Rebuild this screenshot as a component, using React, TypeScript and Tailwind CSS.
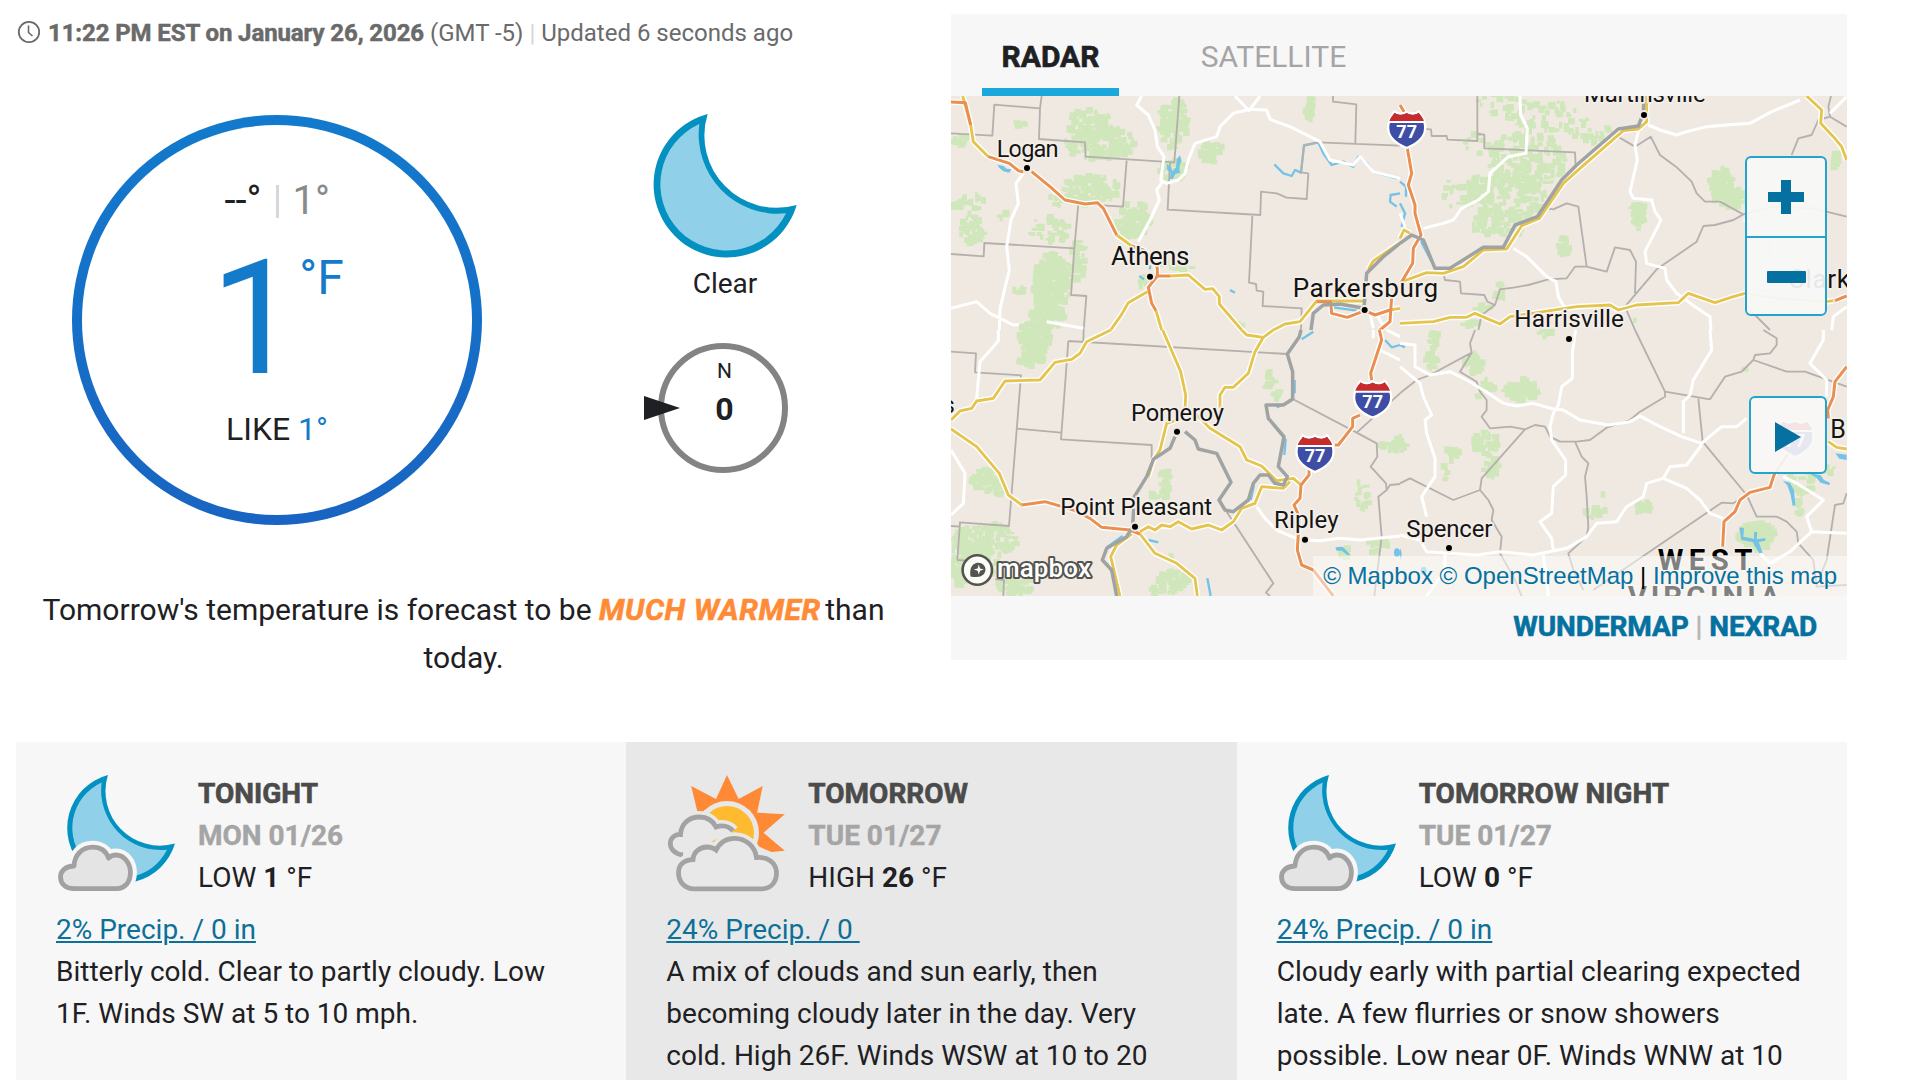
import clsx from "clsx";

type Blob = [cx: number, cy: number, rx: number, ry: number, density?: number];

type Label = {
  text: string;
  x: number;
  y: number;
  width: number;
  size?: number;
  dot?: [number, number];
};

type Tile = {
  x: number;
  y: number;
  woods: Blob[];
  county: string;
  river: string;
  water: string;
  lakes?: string;
  minor: string;
  yellow: string;
  orange: string;
  shields: [number, number][];
  labels: Label[];
};

const tiles: Tile[] = [
  {
    x: -33,
    y: -288,
    woods: [
      [450, 370, 65, 40, 1.8], [480, 430, 105, 50, 1.8], [450, 570, 90, 45, 1.8], [580, 660, 50, 55, 2.4],
      [700, 370, 45, 75, 1.6], [815, 455, 36, 33, 2], [1108, 325, 14, 34, 2.4], [85, 610, 50, 35, 0.8],
      [95, 690, 38, 45, 1.5], [330, 690, 60, 45, 0.9], [335, 850, 56, 90, 3], [415, 780, 24, 60, 1.8], [60, 420, 25, 16, 2],
      [250, 370, 22, 10], [715, 798, 50, 20], [350, 600, 22, 18], [186, 642, 12, 16], [250, 870, 28, 8, 2],
      [320, 950, 55, 40, 2.6], [700, 510, 44, 34, 1.8], [610, 845, 18, 15], [907, 972, 12, 12],
    ],
    county:
      "M33 400L157 407 163 314 300 325 305 288M300 325L297 417 435 427 437 470 703 487 718 288M560 482L549 620 415 612 403 745 133 729 131 769 33 762M403 745L393 885 439 888 431 990M690 487L683 629 961 645 963 575 1010 580 1040 593 1100 597 1105 520 1083 517 1092 435 1135 427 1380 437M1179 288V305L1249 313 1246 430M937 648L927 848 948 852 950 872 970 875 968 918 1085 925 1083 990",
    river: "M1113 990L1120 940 1150 915 1200 912 1272 925 1280 820 1330 770 1380 730",
    water:
      "M1003 493L1030 520 1055 528 1065 510 1083 518 1092 437 1135 427 1150 460 1175 495 1210 485 1240 500 1255 470 1280 490 1300 515 1370 535M1380 580L1352 585 1350 605 1370 620M1180 922L1250 932M870 870L885 878M598 828L612 838M630 795V808",
    lakes:
      "M680 492L692 500 698 514 708 502 710 478 720 466 724 482 718 502 720 518 706 522 698 538 690 536 692 518 682 510ZM172 494L190 498 200 506 214 508 208 518 190 514 178 504Z",
    minor:
      "M605 288L590 315 625 345 645 390 652 440 672 470 668 500 662 540 680 550 715 540 735 520 745 480 765 430 830 410 840 380 880 340 930 328 980 330 990 358 1050 380 1140 425 1170 480 1240 495 1260 470 1300 515 1380 535M668 545L650 570 658 600 630 660 595 725M250 520L228 550 235 610 213 660 200 740 208 810 180 925 178 990M33 925L110 905 150 940 220 975 320 965 430 985M930 328L960 288M885 288L930 335M1290 940L1300 985M1310 945L1335 985",
    yellow:
      "M68 288L92 375 100 425 145 470M530 705L575 738M648 932L665 990M690 828L745 825 795 868 818 866 838 890 838 912 905 990M622 875L565 908 545 943 512 990M1000 990L1035 972 1080 965 1130 903 1270 903M1380 728L1300 783 1285 808M1350 930L1380 925",
    orange:
      "M33 306L76 308 92 375M145 470L208 490 235 512 250 515M275 515L330 560 375 600 435 612 472 608 490 625 530 705M575 738L610 750 640 775 652 805 652 828 625 862 635 910 648 932M652 828H690M1130 905L1172 905 1175 940 1222 952 1275 932 1305 945 1350 930M1355 890L1350 965 1320 990",
    shields: [],
    labels: [
      { text: "Logan", x: 170, y: 470, width: 186, size: 71, dot: [261, 504] },
      { text: "Athens", x: 513, y: 795, width: 235, size: 78, dot: [630, 830] },
      { text: "Parkersburg", x: 1058, y: 890, width: 436, size: 78, dot: [1274, 930] },
    ],
  },
  {
    x: 1347,
    y: -288,
    woods: [
      [300, 310, 80, 30, 0.5], [430, 350, 110, 50, 0.6], [560, 390, 70, 40, 0.6], [380, 480, 120, 85, 1.1],
      [310, 590, 130, 75, 1.1], [300, 670, 85, 40, 1.1], [160, 580, 28, 45, 0.6], [230, 440, 40, 40, 0.4],
      [965, 550, 34, 46, 3], [995, 595, 55, 28, 3], [715, 650, 26, 44, 1.8], [492, 740, 18, 30, 1.8], [300, 880, 20, 28, 1.8],
      [210, 970, 26, 14, 2], [1308, 480, 12, 30, 2], [250, 925, 28, 16], [700, 955, 8, 8],
    ],
    county:
      "M232 288V423L142 419 140 408 95 408 93 388 40 385M232 402L253 404V445L525 457 527 498M650 408L705 440 752 410 780 465 828 500 875 545 890 580 915 605 960 605 1030 643 1000 660 945 675 910 678 890 725 770 808 675 920 705 990M440 625L460 628 500 610 535 620 560 800M130 820L135 840 180 845 183 880 253 885 262 905 285 915 300 868 345 862 385 855 445 838 500 835 525 800 560 800 620 815 645 742 690 750 708 785 705 880M285 915L245 945 235 990M1030 643L1120 620 1240 625 1340 650M1175 465L1195 415 1235 405 1255 360 1290 350 1340 380M1290 350L1285 320 1293 288M1050 930L1110 990",
    river:
      "M732 288L730 340 715 378 655 387 530 495 485 540 412 650 345 675 310 742 250 742 150 805 105 805 70 720 35 705 0 730",
    water: "M0 545L18 560 18 590M0 610L15 640 5 680M62 722L95 785",
    minor:
      "M360 288L362 345 382 385 378 460 325 470 270 520 265 575 235 600 185 625 160 660 130 670 70 685M745 375L780 390 830 405 860 395 920 380 980 375 1050 370 1115 335 1200 300M715 395L705 435 712 480 690 575 700 595 755 600 765 635 783 660 735 755 740 790 795 805 800 840 830 880 885 920 930 950 933 990M340 745L380 770 440 830 468 845 475 890 495 925M1340 290L1290 340M1030 660L1120 690 1125 780M1340 920L1300 950 1295 990M0 640L15 680",
    yellow:
      "M740 288L740 365 715 387 670 392 540 505 490 550 418 655 365 677 320 747 250 750 190 800 130 820 80 818 0 847M0 970L100 965 150 952 200 952 225 940 260 955 300 972 330 950 430 935 530 920 630 915 655 930 710 915 835 908 865 880 945 908 1000 890 1035 880 1130 895 1280 905 1300 902M0 715L12 690 30 700M1220 288L1265 330 1262 370 1300 410 1325 440 1340 480",
    orange: "M0 315L15 340M22 445L35 520 25 555 45 615 45 640 63 705 40 745 38 790 5 845M1305 902L1340 888",
    shields: [[20, 388]],
    labels: [
      { text: "Martinsville", x: 552, y: 305, width: 365, size: 72, dot: [732, 345] },
      { text: "Harrisville", x: 343, y: 980, width: 329, size: 73, dot: [507, 1017] },
      { text: "Clarksburg", x: 1164, y: 865, width: 392, size: 78 },
    ],
  },
  {
    x: -33,
    y: 702,
    woods: [
      [285, 20, 50, 50, 3], [275, 85, 40, 26, 3], [140, 450, 46, 34, 2], [175, 480, 16, 18, 2], [675, 455, 18, 42, 2],
      [660, 490, 30, 20, 2], [985, 150, 24, 28, 1.4], [1012, 190, 10, 20, 2.4], [140, 630, 95, 50, 1.4], [60, 680, 26, 90, 1.6],
      [120, 690, 60, 70, 1], [230, 765, 55, 30, 1.4], [700, 755, 46, 32, 2.6], [650, 785, 25, 15, 2], [1365, 345, 42, 20, 1.8],
      [1265, 495, 28, 45, 0.8], [1310, 640, 38, 16, 1.6], [1305, 665, 13, 18], [1215, 670, 30, 16], [700, 678, 8, 12],
    ],
    county:
      "M33 65L108 70 105 127 243 136 207 588 60 577 52 690 95 693M33 588L60 590M165 748L192 750 190 798M385 33L363 328 635 345 635 390M385 33L1042 72M232 296L363 308M431 0L430 33M1058 207L1250 308 1310 340 1312 380 1292 410 1338 460 1340 480 1315 500 1325 620 1303 798M1250 308L1380 190M850 530L1000 760 978 788 990 798M1340 480L1350 465 1380 462",
    river:
      "M1083 0L1078 20 1042 72 1058 125 1058 207 1030 225 978 225 985 265 1032 320 1015 410 1042 440 1030 465 1005 460 985 435 960 435 940 460 925 510 880 545 855 540 837 510 873 457 830 370 775 357 765 330 735 305M705 320L690 355 640 388 620 440 583 500 578 590 560 620 500 655 487 690 515 720 530 798",
    water:
      "M1120 5L1085 28M1064 150V190M1050 215L1010 232M1000 285L1037 330 1033 375M942 465L932 510M625 630L655 637M802 745L812 798M1335 30L1355 52 1380 45M548 618L500 652M500 700L525 740",
    lakes: "M1186 652L1208 650 1220 662 1232 676 1220 674 1206 662 1190 662ZM1362 668a9 13 0 1 0 18 0a9 13 0 1 0 -18 0Z",
    minor:
      "M175 0V33L120 95 110 205M33 360L75 430 70 520 33 555M950 530L975 565 1010 600 1075 628M1100 630L1140 632 1200 625 1260 630 1380 618M1300 0L1300 25M1380 90L1320 60M1340 0L1380 20",
    yellow:
      "M512 0L440 35 420 70 395 88 345 97 300 150 195 153 160 205 110 213 95 235 60 243 33 270M33 297L110 350 178 430 205 495 245 525M668 0L722 125 737 195 735 245M765 250L810 295 900 350 920 390 965 408 1010 452 1060 445 1083 465M905 0L920 15 970 22 1000 0M970 22L945 65 925 130 880 172 855 172 840 195 840 235M735 262L680 280 660 360 640 390 625 440M600 605L625 590 645 600 665 585 690 590 715 575 755 597 805 585 845 600 880 575 905 535 945 520 965 470 1030 475 1050 455M600 612L645 670 710 700 765 745 772 798M575 612L530 645 512 680 540 798",
    orange:
      "M1318 0L1325 30 1292 130 1295 150M1260 255L1238 265 1238 290 1195 345 1185 345M1107 420L1107 435 1083 465 1080 505 1062 525 1078 560 1072 660 1085 705 1120 720 1180 798M245 525L315 515 400 540 450 565 485 592 570 600 600 612",
    shields: [[1298, 207], [1125, 370]],
    labels: [
      { text: "s", x: 8, y: 250, width: 34, size: 70 },
      { text: "Pomeroy", x: 573, y: 273, width: 279, size: 71, dot: [711, 305] },
      { text: "Point Pleasant", x: 361, y: 555, width: 455, size: 72, dot: [585, 590] },
      { text: "Ripley", x: 1002, y: 595, width: 194, size: 72, dot: [1095, 629] },
    ],
  },
  {
    x: 1347,
    y: 702,
    woods: [
      [103, 30, 18, 32, 1.8], [98, 90, 20, 26, 1.8], [220, 100, 26, 34, 2], [240, 195, 12, 14], [365, 180, 52, 32, 2.4],
      [265, 165, 22, 22, 1.6], [255, 340, 40, 38, 1.8], [275, 410, 22, 38, 1.8], [155, 375, 24, 22], [138, 430, 8, 30],
      [435, 10, 25, 12], [730, 530, 27, 22, 2.6], [580, 545, 40, 16, 1.4], [605, 497, 8, 6], [1070, 620, 56, 42, 3.2],
      [1200, 455, 45, 40, 1.2], [1198, 530, 16, 26, 1.6], [1290, 415, 16, 20], [2, 340, 10, 20], [1040, 118, 8, 6],
    ],
    county:
      "M225 0L210 40 215 68 90 135 50 150 0 190M215 68L180 125 230 155 240 185 260 210 260 240 245 260 270 295 330 290 375 298 245 445 240 480 160 510 30 445 0 460M240 480L265 510 280 540 275 570 305 620 300 670 340 740 365 798M375 298L405 285 435 290 450 320 480 335 530 335 570 330 620 293 690 270 720 245 795 200 795 185 705 0M795 185L930 208 975 140 1025 125 1060 90 1065 75 1110 70 1130 45 1130 25 1090 0M1060 90L1160 125 1215 125 1340 170M895 205L908 335 1040 495 1070 560 1130 560 1160 575 1190 605 1195 640 1240 690 1250 770 1340 765M1040 495L1000 520 965 518 580 780M525 335L545 380 565 400 555 440 560 500 565 590 560 620 505 670 520 720 550 780M1340 490L1330 520 1305 525 1280 690 1260 740",
    river: "",
    water: "M0 45L15 52",
    lakes:
      "M1018 592L1032 594 1030 620 1062 626 1062 606 1072 606 1070 628 1096 624 1096 632 1076 636 1088 668 1078 670 1066 650 1058 636 1024 630ZM1148 452L1170 458 1182 480 1186 526 1178 528 1172 494 1162 466ZM1225 428L1262 436 1272 450 1290 458 1288 466 1262 458 1250 444ZM1306 370L1340 374V390L1318 386ZM62 722a9 12 0 1 0 18 0a9 12 0 1 0 -18 0ZM0 655Q10 672 0 690Z",
    minor:
      "M0 40L45 45 45 110 90 135 150 125 200 150 250 180 310 220 350 228 400 220 460 237 490 240 540 270 625 285 690 275 720 258 780 290 845 320 905 340 940 310 965 290 1010 290 1040 265M527 0L517 70 517 145 485 170 475 225 460 250 450 290 455 330 497 390 497 435 460 470 455 550 420 575 455 625 460 660M0 110L60 160 70 200 95 255 75 270 80 310 105 385 105 440 65 500 80 560M0 615L60 630 80 665 150 670 230 675 300 665 400 675 500 655 560 620 590 580 650 575 680 530 730 500 740 460 790 445 810 410 860 405 905 345M930 0L935 60 880 150 870 195 850 215 850 310M1270 0L1270 30 1230 100 1280 150 1280 200M790 445L860 475 900 510 930 550 970 565M1150 440L1190 460 1270 510 1220 560 1235 605 1340 610M1235 605L1170 665 1110 700 1080 670M135 670L135 720 80 798M430 675L445 798",
    yellow: "M1285 335L1310 352 1340 357",
    orange: "M1340 110L1305 155 1300 200 1283 240 1285 265M1165 370L1122 435 1110 472 1050 487 1020 510 1005 545 972 575 968 650",
    shields: [[1185, 325]],
    labels: [
      { text: "Spencer", x: 19, y: 620, width: 258, size: 72, dot: [147, 654] },
      { text: "Bu", x: 1291, y: 325, width: 88, size: 75 },
    ],
  },
];

// Scatter small axis-aligned cells inside an ellipse, seeded so every render is the same
function woodland([cx, cy, rx, ry, density = 1.2]: Blob) {
  let seed = Math.round(cx * 31 + cy * 17 + rx) + 7;
  const rand = () => {
    seed = (seed * 1103515245 + 12345) % 2147483648;
    return seed / 2147483648;
  };
  const count = Math.round(((3.14 * rx * ry) / 200) * density);
  let d = "";
  for (let i = 0; i < count; i++) {
    const angle = rand() * 6.283;
    const r = Math.sqrt(rand());
    const w = 8 + rand() * 16;
    const h = 8 + rand() * 14;
    const x = cx + Math.cos(angle) * r * rx - w / 2;
    const y = cy + Math.sin(angle) * r * ry - h / 2;
    d += `M${x.toFixed(0)} ${y.toFixed(0)}h${w.toFixed(0)}v${h.toFixed(0)}h-${w.toFixed(0)}z`;
  }
  return d;
}

function Shield({ x, y }: { x: number; y: number }) {
  return (
    <g transform={`translate(${x} ${y})`}>
      <path
        d="M-37 -54C-26 -45 -12 -45 0 -53C12 -45 26 -45 37 -54C42 -45 52 -34 55 -14C60 18 36 42 0 56C-36 42 -60 18 -55 -14C-52 -34 -42 -45 -37 -54Z"
        fill="#3f4ea5"
        stroke="#fff"
        strokeWidth="7"
      />
      <path
        d="M-36 -50C-26 -42 -12 -42 0 -49C12 -42 26 -42 36 -50C42 -42 50 -34 52 -24H-52C-50 -34 -42 -42 -36 -50Z"
        fill="#c72b2b"
      />
      <path d="M-54 -22H54" stroke="#fff" strokeWidth="6" />
      <text y="26" textAnchor="middle" fill="#fff" className="text-[54px] font-bold">
        77
      </text>
    </g>
  );
}

function RadarMap() {
  return (
    <svg viewBox="0 0 2688 1500" className="block h-full w-full bg-[#efe9e1]" fill="none" strokeLinejoin="round">
      {tiles.map((tile, i) => (
        <g key={i} transform={`translate(${tile.x} ${tile.y})`}>
          <path d={tile.woods.map(woodland).join("")} fill="#d0e7bb" />
          <path d={tile.water} stroke="#74c3e6" strokeWidth="7" />
          <path d={tile.county} stroke="#b5b0ae" strokeWidth="5.5" />
          <path d={tile.minor} stroke="#fff" strokeWidth="9" />
          {tile.lakes && <path d={tile.lakes} fill="#74c3e6" />}
          <path d={tile.yellow} stroke="#fff" strokeWidth="17" />
          <path d={tile.orange} stroke="#fff" strokeWidth="17" />
          <path d={tile.yellow} stroke="#e5c44e" strokeWidth="8.5" />
          <path d={tile.orange} stroke="#e98f52" strokeWidth="9" />
          <path d={tile.river} stroke="#a0a3a4" strokeWidth="10.5" />
        </g>
      ))}
      {tiles.map((tile, i) => (
        <g key={i} transform={`translate(${tile.x} ${tile.y})`}>
          {tile.shields.map(([x, y]) => (
            <Shield key={x} x={x} y={y} />
          ))}
          {tile.labels.map((label) => (
            <g key={label.text}>
              {label.dot && (
                <circle cx={label.dot[0]} cy={label.dot[1]} r="12" fill="#000" stroke="#efe9e1" strokeWidth="6" />
              )}
              <text
                x={label.x}
                y={label.y}
                fontSize={label.size}
                textLength={label.width}
                fill="#141414"
                stroke="#f3eee8"
                strokeWidth="11"
                paintOrder="stroke"
              >
                {label.text}
              </text>
            </g>
          ))}
        </g>
      ))}
      <g fill="#000" stroke="#f3eee8" strokeWidth="9" paintOrder="stroke" className="text-[88px] font-bold">
        <text x="2120" y="1422" textLength="284">
          WEST
        </text>
        <text x="2030" y="1532" textLength="456">
          VIRGINIA
        </text>
      </g>
    </svg>
  );
}

function MapboxLogo() {
  return (
    <svg viewBox="0 0 134 34" className="absolute bottom-[9px] left-[9px] h-[34px] w-[134px]" fill="none">
      <circle cx="17.3" cy="17" r="14.7" fill="#fff" fillOpacity="0.85" stroke="#54534f" strokeWidth="2.6" />
      <path
        d="M10.5 23.5C9.6 17.6 10.7 14 13.4 11.6C16.6 8.9 21 9.3 23.6 11.9C26.2 14.6 26 18.8 23.4 21.5C20.8 24 17 24.6 10.5 23.5Z"
        fill="#54534f"
      />
      <path d="M18.8 11.6L20 15.4L23.8 16.6L20 17.8L18.8 21.6L17.6 17.8L13.8 16.6L17.6 15.4Z" fill="#fff" />
      <text
        x="37"
        y="24"
        textLength="94"
        fill="#fff"
        stroke="#54534f"
        strokeWidth="4"
        strokeLinejoin="round"
        paintOrder="stroke"
        className="text-[26px] font-medium"
      >
        mapbox
      </text>
    </svg>
  );
}

function MoonShape() {
  return (
    <>
      <path d="M263 42A219 219 0 1 0 530 315A217 217 0 0 1 263 42Z" fill="#0391c1" />
      <path d="M238 72A198.5 198.5 0 1 0 498 340A238 238 0 0 1 238 72Z" fill="#90d1e9" />
    </>
  );
}

function NightCloudIcon() {
  const cloud =
    "M18 115.7H60.5C69 115.7 74.4 109 74.4 99.5C74.4 90 68 82 60 82C57 82 54.5 83 52.5 85C50 78 44 74.2 36.5 74.2C26 74.2 18.5 82 18 93C10 93 4.5 97.5 4.5 104C4.5 111 10 115.7 18 115.7Z";
  return (
    <svg viewBox="0 0 120 120" className="h-[120px] w-[120px] shrink-0" strokeLinejoin="round">
      <g transform="translate(-14.1 -8.6) scale(0.2511)">
        <MoonShape />
      </g>
      <path d={cloud} fill="#f7f7f7" stroke="#f7f7f7" strokeWidth="13" />
      <path d={cloud} fill="#e4e4e4" stroke="#a1a1a1" strokeWidth="4.8" />
    </svg>
  );
}

function SunCloudIcon() {
  const back = "M17 82C9 81 4.3 76 4.3 70.5C4.3 65 9 61 14.5 61.5C15 51 23 44 33.5 44C41 44 47 48 50 54C56 52 63 53 67 58";
  const front =
    "M28 115.8C18 115.8 12.5 108 12.5 99.5C12.5 92 18 87 27 86.5C27.5 79 34 74 41 74C44.5 74 47.5 75 50 77C54 69.5 60 65.3 68.5 65.3C80 65.3 89 73.5 90.5 84.5C102 83.5 110.5 90 110.5 100C110.5 109 105 115.8 96 115.8Z";
  return (
    <svg viewBox="0 0 120 120" className="h-[120px] w-[120px] shrink-0" fill="none">
      <path d="M61 2L72.6 26L96.7 13L91.1 39.7L118.8 41.3L97.5 59.7L118.8 77.7L105.6 79L61 60L31.2 38L25.2 13L50 26Z" fill="#ff8935" />
      <circle cx="61" cy="60" r="32" fill="#e8e8e8" />
      <circle cx="61" cy="60" r="27" fill="#ffba2f" />
      <path d={back} fill="#e8e8e8" stroke="#e8e8e8" strokeWidth="12" />
      <path d={back} fill="#e8e8e8" stroke="#a3a3a3" strokeWidth="4.8" />
      <path d={front} fill="#e8e8e8" stroke="#e8e8e8" strokeWidth="12" />
      <path d={front} stroke="#a3a3a3" strokeWidth="4.8" />
    </svg>
  );
}

const forecasts = [
  {
    title: "TONIGHT",
    date: "MON 01/26",
    kind: "LOW",
    temp: "1",
    precip: "2% Precip. / 0 in",
    lines: ["Bitterly cold. Clear to partly cloudy. Low", "1F. Winds SW at 5 to 10 mph."],
  },
  {
    title: "TOMORROW",
    date: "TUE 01/27",
    kind: "HIGH",
    temp: "26",
    precip: "24% Precip. / 0\u00a0",
    lines: [
      "A mix of clouds and sun early, then",
      "becoming cloudy later in the day. Very",
      "cold. High 26F. Winds WSW at 10 to 20",
    ],
    day: true,
  },
  {
    title: "TOMORROW NIGHT",
    date: "TUE 01/27",
    kind: "LOW",
    temp: "0",
    precip: "24% Precip. / 0 in",
    lines: [
      "Cloudy early with partial clearing expected",
      "late. A few flurries or snow showers",
      "possible. Low near 0F. Winds WNW at 10",
    ],
  },
];

function Conditions() {
  return (
    <section className="w-[927px]">
      <p className="flex h-[38px] items-center pl-[17px] text-[24px] leading-[36px] whitespace-pre text-[#6a6a6a]">
        <svg viewBox="0 0 24 24" className="mr-[7px] mb-[2px] h-[24px] w-[24px]" fill="none" stroke="currentColor">
          <circle cx="12" cy="12" r="10.2" strokeWidth="1.8" />
          <path d="M11.5 5.5V12.5L15.5 16" strokeWidth="1.6" />
        </svg>
        <span className="font-bold tracking-[-0.1px] [-webkit-text-stroke:0.5px]">11:22 PM EST on January 26, 2026</span>
        <span> (GMT -5) </span>
        <span className="text-[#d5d5d5]">|</span>
        <span> Updated 6 seconds ago</span>
      </p>

      <div className="mt-[63px] flex">
        <div className="ml-[72px] h-[410px] w-[410px] rounded-full bg-linear-to-b from-[#127acc] to-[#1964c2] p-[10px]">
          <div className="flex h-full flex-col items-center rounded-full bg-white">
            <div className="mt-[52px] flex h-[48px] items-center text-[40px] leading-[48px]">
              <span className="w-[51px] text-[#1e2023]">--°</span>
              <span className="h-[33px] w-[3px] bg-[#d5d7dd]" />
              <span className="w-[51px] pl-[14px] text-[#8a8a8a]">1°</span>
            </div>
            <div className="mt-[14px] flex h-[160px] text-[#147bcb]">
              <span className="text-[160px] leading-[160px]">1</span>
              <span className="mt-[11px] -ml-px text-[48px] leading-[56px]">°F</span>
            </div>
            <div className="mt-[10px] text-[32px] leading-[40px] text-[#1e2023]">
              LIKE <span className="text-[#147bcb]">1°</span>
            </div>
          </div>
        </div>

        <div className="-mt-px ml-[162px] flex w-[162px] flex-col items-center">
          <svg viewBox="99 42 432 432" className="h-[144px] w-[144px]">
            <MoonShape />
          </svg>
          <span className="mt-[5px] leading-[42px]">Clear</span>
          <div className="relative mt-[38px] mr-[5px] flex h-[130px] w-[130px] flex-col items-center rounded-full border-[6px] border-[#838383] pl-[4px]">
            <svg viewBox="0 0 36 24" className="absolute top-[47px] left-[-20px] h-[24px] w-[36px]">
              <path d="M0 0L36 12L0 24Z" fill="#1e2023" />
            </svg>
            <span className="mt-[9px] text-[21px] leading-[26px]">N</span>
            <span className="mt-[5px] text-[32px] leading-[40px] font-bold">0</span>
          </div>
        </div>
      </div>

      <p className="mt-[61px] text-center text-[30px] leading-[48px]">
        Tomorrow's temperature is forecast to be{" "}
        <em className="mr-[-3px] font-bold tracking-[0.6px] text-[#ff8b36] [-webkit-text-stroke:0.6px]">MUCH WARMER</em> than
        <br />
        today.
      </p>
    </section>
  );
}

function RadarPanel() {
  return (
    <section className="flex h-[646px] w-[896px] shrink-0 flex-col bg-[#f7f7f7]">
      <div className="flex h-[82px] pl-[31px] text-[30px]">
        <button className="h-full w-[137px] border-b-8 border-[#1aa8dc] pt-[12px] font-bold [-webkit-text-stroke:0.6px]">RADAR</button>
        <button className="ml-[62px] h-full w-[185px] border-b-8 border-transparent pt-[12px] text-[#a5a5a5]">SATELLITE</button>
      </div>
      <div className="relative h-[500px] overflow-hidden">
        <RadarMap />
        <div className="absolute top-[60px] right-[20px] h-[160px] w-[82px] rounded-[6px] border-2 border-[#22a4cc] bg-[#f8f8f8]/93">
          <button className="flex h-[80px] w-full items-center justify-center border-b-2 border-[#22a4cc]">
            <svg viewBox="0 0 36 36" className="h-[36px] w-[36px]" stroke="#0571a0" strokeWidth="10">
              <path d="M0 18H36M18 1V35" />
            </svg>
          </button>
          <button className="flex h-[78px] w-full items-center justify-center">
            <span className="h-[12px] w-[39px] rounded-[1px] bg-[#0571a0]" />
          </button>
        </div>
        <button className="absolute top-[300px] right-[20px] flex h-[78px] w-[78px] items-center justify-center rounded-[6px] border-2 border-[#22a4cc] bg-[#f8f8f8]/90 pt-[4px]">
          <svg viewBox="0 0 26 30" className="h-[30px] w-[26px]">
            <path d="M0 0L26 15L0 30Z" fill="#0571a0" />
          </svg>
        </button>
        <MapboxLogo />
        <div className="absolute right-0 bottom-0 h-[40px] bg-white/50 px-[10px] font-['Liberation_Sans',Arial,sans-serif] text-[24px] leading-[40px] whitespace-nowrap text-[#0571a0]">
          © Mapbox © OpenStreetMap <span className="text-black">|</span> Improve this map
        </div>
      </div>
      <div className="flex h-[64px] items-center justify-end pr-[30px] pb-[2px] font-bold tracking-[-0.1px] text-[#0571a0] [-webkit-text-stroke:0.6px]">
        WUNDERMAP<span className="mx-[7px] font-normal text-[#b5b5b5]">|</span>NEXRAD
      </div>
    </section>
  );
}

export default function App() {
  return (
    <div className="h-[1080px] w-[1920px] overflow-hidden bg-white pt-[14px] font-['Roboto',sans-serif] text-[28px] leading-[42px] text-[#1e2023]">
      <div className="flex h-[646px]">
        <div className="w-[951px] shrink-0">
          <Conditions />
        </div>
        <RadarPanel />
      </div>

      <div className="mt-[82px] ml-[16px] grid w-[1831px] grid-cols-3">
        {forecasts.map((forecast) => (
          <article
            key={forecast.title}
            className={clsx("h-[400px] px-[40px] pt-[31px] whitespace-nowrap", forecast.day ? "bg-[#e8e8e8]" : "bg-[#f7f7f7]")}
          >
            <div className="flex gap-[22px]">
              {forecast.day ? <SunCloudIcon /> : <NightCloudIcon />}
              <div>
                <h3 className="font-bold text-[#4b4b4b] [-webkit-text-stroke:0.6px]">{forecast.title}</h3>
                <p className="font-bold text-[#a5a5a5] [-webkit-text-stroke:0.4px]">{forecast.date}</p>
                <p>
                  {forecast.kind} <b>{forecast.temp}</b> °F
                </p>
              </div>
            </div>
            <a className="mt-[10px] block text-[#0c7099] underline decoration-2 underline-offset-2">{forecast.precip}</a>
            {forecast.lines.map((line) => (
              <p key={line}>{line}</p>
            ))}
          </article>
        ))}
      </div>
    </div>
  );
}
